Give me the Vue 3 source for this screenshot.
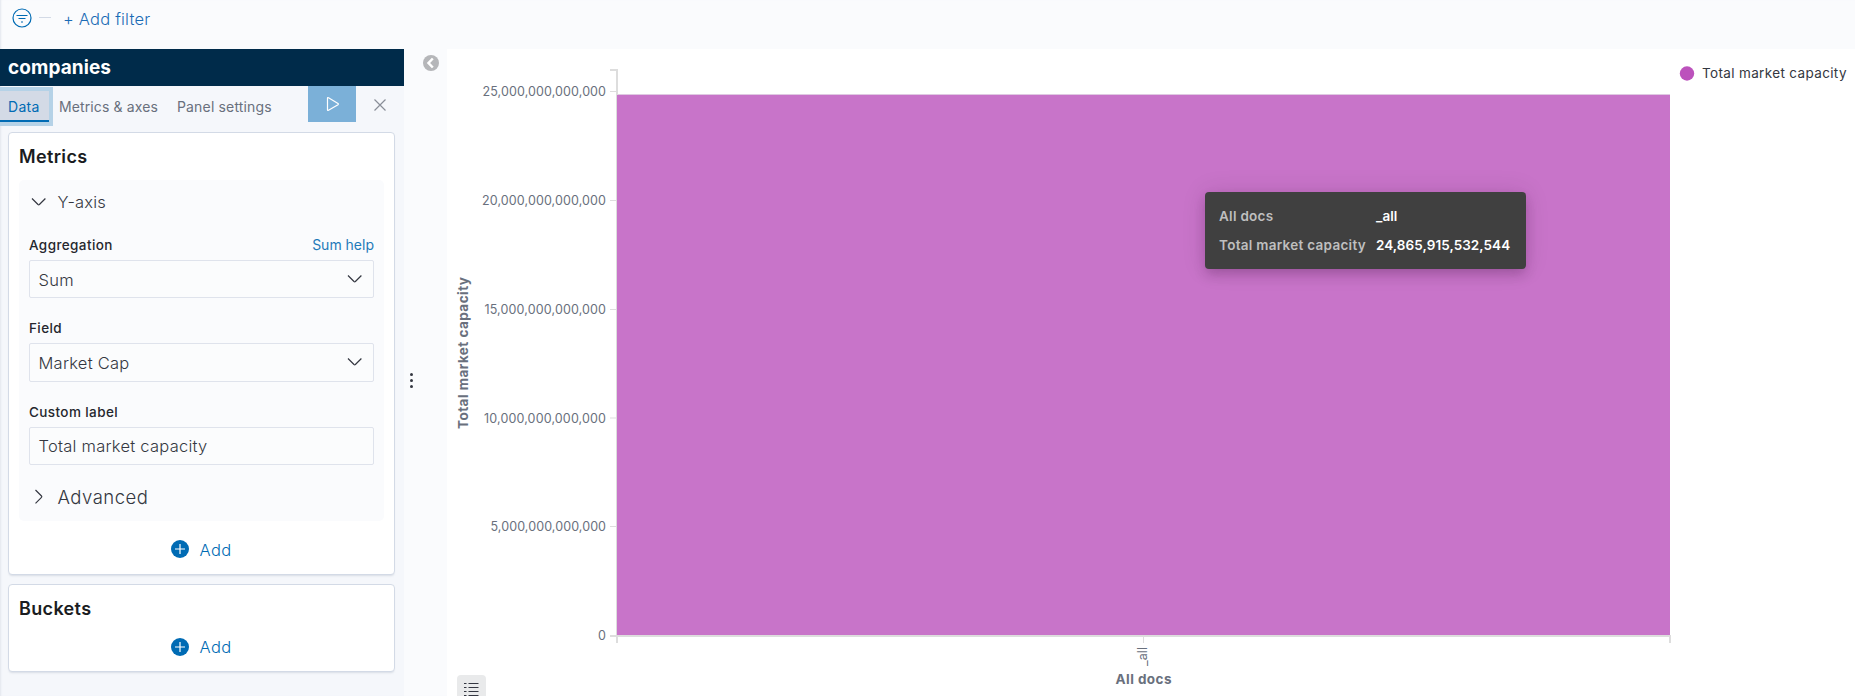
<script setup>
const ticks = [
  { y: 91.5, label: '25,000,000,000,000', w: 123.5 },
  { y: 200.5, label: '20,000,000,000,000', w: 124 },
  { y: 309.5, label: '15,000,000,000,000', w: 121.5 },
  { y: 418, label: '10,000,000,000,000', w: 122 },
  { y: 526.5, label: '5,000,000,000,000', w: 115.5 },
  { y: 635.5, label: '0', w: 7.5 },
]
</script>

<template>
  <div class="page">
    <header class="filters">
      <svg class="filter-icon" width="20" height="20" viewBox="0 0 20 20">
        <circle cx="10" cy="10" r="9" />
        <path d="M4.500 7.500h11M6.500 10.500h7M9 14h2" />
      </svg>
      <span class="dash"></span>
      <a class="add-filter">+ Add filter</a>
    </header>
    <div class="body">
      <aside class="sidebar">
        <h1 class="title"><span>companies</span></h1>
        <nav class="tabs">
          <div class="tab active"><span>Data</span></div>
          <div class="tab axes"><span>Metrics &amp; axes</span></div>
          <div class="tab panel"><span>Panel settings</span></div>
          <button class="play">
            <svg width="14" height="16" viewBox="0 0 14 16"><path d="M1.500 2.300v11.400q0 1.200 1 .6l9.500-5.600q.8-.6 0-1.200L2.500 1.700q-1-.6-1 .6z" /></svg>
          </button>
          <button class="close">
            <svg width="12" height="12" viewBox="0 0 12 12"><path d="M.5.5l11 11M11.500.5l-11 11" /></svg>
          </button>
        </nav>
        <section class="card metrics">
          <h2><span>Metrics</span></h2>
          <div class="agg">
            <div class="acc yaxis">
              <svg width="16" height="16" viewBox="0 0 16 16"><path d="M1 4.500l6 6q.7.6 1.400 0l6-6" /></svg>
              <span>Y-axis</span>
            </div>
            <div class="label first"><span>Aggregation</span><a>Sum help</a></div>
            <div class="field">
              <span>Sum</span>
              <svg width="16" height="16" viewBox="0 0 16 16"><path d="M1 4.500l6 6q.7.6 1.400 0l6-6" /></svg>
            </div>
            <div class="label"><span>Field</span></div>
            <div class="field tall">
              <span>Market Cap</span>
              <svg width="16" height="16" viewBox="0 0 16 16"><path d="M1 4.500l6 6q.7.6 1.400 0l6-6" /></svg>
            </div>
            <div class="label"><span>Custom label</span></div>
            <div class="field input"><span>Total market capacity</span></div>
            <div class="acc advanced">
              <svg width="16" height="16" viewBox="0 0 16 16"><path d="M4.500 1l6 6q.6.7 0 1.400l-6 6" /></svg>
              <span>Advanced</span>
            </div>
          </div>
          <div class="add">
            <svg width="18" height="18" viewBox="0 0 18 18"><circle cx="9" cy="9" r="9" /><path d="M4 9h10M9 4v10" /></svg>
            <span>Add</span>
          </div>
        </section>
        <section class="card buckets">
          <h2><span>Buckets</span></h2>
          <div class="add">
            <svg width="18" height="18" viewBox="0 0 18 18"><circle cx="9" cy="9" r="9" /><path d="M4 9h10M9 4v10" /></svg>
            <span>Add</span>
          </div>
        </section>
      </aside>
      <div class="gutter">
        <svg class="collapse" width="16" height="16" viewBox="0 0 16 16"><circle cx="8" cy="8" r="8" /><path d="M9.800 3.500L5.500 8l4.300 4.500" /></svg>
        <div class="handle"><i></i><i></i><i></i></div>
      </div>
      <main class="vis">
        <svg class="chart" width="1408" height="647" viewBox="447 49 1408 647">
          <rect class="bar" x="617" y="95" width="1053" height="540" />
          <rect class="bar-edge" x="617" y="94" width="1053" height="1" />
          <path class="axis thin" d="M616.500 70V636" />
          <path class="axis" d="M610 70H617V95M610 636H1670V643M617 636V643" />
          <path class="axis thin" d="M1143.500 637V643" />
          <g v-for="t in ticks" :key="t.label">
            <path v-if="t.label !== '0'" class="axis thin" :d="`M610 ${t.y}H616`" />
            <text class="tick" x="606" :y="t.y + 4.500" :textLength="t.w" text-anchor="end">{{ t.label }}</text>
          </g>
          <text class="tick" transform="translate(1147 666) rotate(-90)" textLength="19">_all</text>
          <text class="name" x="1115.500" y="684" textLength="56">All docs</text>
          <text class="name" transform="translate(468 429) rotate(-90)" textLength="152">Total market capacity</text>
          <circle class="dot" cx="1687" cy="73.500" r="7.200" />
          <text class="legend" x="1702" y="78" textLength="144.500">Total market capacity</text>
        </svg>
        <button class="list">
          <svg width="16" height="16" viewBox="0 0 16 16"><path d="M1 1.500h2.500M5.500 1.500h10M1 5.500h2.500M5.500 5.500h10M1 9.500h2.500M5.500 9.500h10M1 13.500h2.500M5.500 13.500h10" /></svg>
        </button>
        <div class="tooltip">
          <span class="k">All docs</span><span class="v">_all</span>
          <span class="k">Total market capacity</span><span class="v">24,865,915,532,544</span>
        </div>
      </main>
    </div>
  </div>
</template>

<style>
body { margin: 0; overflow: hidden; }
</style>

<style scoped>
* { box-sizing: border-box; }
.page { width: 1855px; height: 696px; overflow: hidden; background: #fafbfd; font-family: Inter, "Liberation Sans", sans-serif; color: #343741; display: flex; flex-direction: column; box-shadow: inset 2px 0 2px -1px #e3e7ee; }
svg { display: block; flex: none; }
svg path { fill: none; stroke: currentColor; stroke-width: 1.2; }
button { border: 0; padding: 0; margin: 0; background: none; }
span, a { white-space: nowrap; }
.filters { height: 49px; flex: none; display: flex; align-items: flex-start; padding: 8px 0 0 12px; color: #006bb4; }
.filter-icon circle { fill: none; stroke: currentColor; stroke-width: 1.2; }
.dash { width: 12px; height: 1px; background: #d3dae6; margin: 9px 12px 0 7px; }
.add-filter { font-size: 16.500px; line-height: 22px; font-weight: 350; color: #1a6bb5; letter-spacing: .2px; }
.body { flex: 1; display: flex; min-height: 0; }
.sidebar { width: 404px; background: #f5f7fb; flex: none; box-shadow: inset 2px 0 2px -1px #e3e7ee; }
.title { margin: 0; height: 37px; background: #002b4a; color: #fff; font-size: 19px; line-height: 37px; font-weight: 700; padding-left: 8px; }
.title span { letter-spacing: .08px; }
.tabs { height: 46px; display: flex; align-items: flex-start; color: #69707d; font-size: 14px; line-height: 41px; }
.active { width: 49px; height: 31px; margin-top: 5px; background: #d3dae6; color: #006bb4; padding-left: 8px; line-height: 31px; border-bottom: 2px solid #006bb4; box-shadow: 0 0 0 4px #b5d2e7; clip-path: inset(-4px -4px -4px 0); letter-spacing: .3px; }
.axes { margin-left: 10px; width: 118px; }
.axes span { letter-spacing: .12px; }
.panel { width: 131px; }
.panel span { letter-spacing: .16px; }
.play { width: 48px; height: 36px; background: #7bb0d8; color: #fff; display: flex; align-items: center; justify-content: center; }
.play svg { margin-left: 1px; }
.close { margin: 13px 0 0 18px; color: #898e98; }
.card { margin-left: 8px; width: 387px; background: #fff; border: 1px solid #d3dae6; border-radius: 4px; box-shadow: 0 2px 2px -1px rgba(152,162,179,.3); padding: 0 10px; }
.metrics { height: 443px; }
.buckets { height: 88px; margin-top: 9px; }
h2 { margin: 0; height: 47px; font-size: 18px; line-height: 47px; font-weight: 600; color: #1a1c21; }
h2 span { letter-spacing: .35px; }
.agg { width: 365px; height: 341px; border-radius: 5px; background: #fafbfd; padding: 0 10px; }
.acc { display: flex; align-items: center; padding-left: 2px; gap: 11px; font-weight: 350; }
.yaxis { height: 44px; font-size: 16.500px; letter-spacing: .2px; }
.advanced { height: 65px; font-size: 18.500px; letter-spacing: .5px; padding-bottom: 1px; }
.acc svg { margin-right: -.5px; }
.label { height: 45px; padding-top: 22px; font-size: 13.500px; line-height: 16px; font-weight: 550; display: flex; justify-content: space-between; letter-spacing: .4px; color: #25272e; }
.label.first { height: 36px; padding-top: 13px; }
.label a { color: #1f7ab9; font-weight: 400; font-size: 14px; letter-spacing: 0; }
.field { height: 38px; border: 1px solid #dfe3ec; border-radius: 2px; background: #fbfcfd; display: flex; align-items: center; justify-content: space-between; padding: 1px 10px 0 8.500px; font-size: 16.500px; font-weight: 300; color: #343741; letter-spacing: .25px; }
.field.input { padding: 0 10px 1px 8.500px; }
.field svg { position: relative; top: -1px; }
.tall { height: 39px; }
.add { height: 38px; display: flex; align-items: center; justify-content: center; gap: 11px; color: #006bb4; font-size: 16.500px; font-weight: 350; letter-spacing: .3px; margin: 9px 1px 0 0; }
.add span { position: relative; top: 1px; }
.add circle { fill: #006bb4; }
.add path { stroke: #fff; }
.buckets .add { margin-top: -4px; }
.buckets .add span { top: 0; }
.gutter { width: 43px; flex: none; padding: 6px 0 0 18.500px; }
.collapse circle { fill: #b5b6b9; }
.collapse path { stroke: #fff; stroke-width: 2.500; }
.handle { display: flex; flex-direction: column; gap: 3px; margin: 302px 0 0 -12.500px; }
.handle i { width: 3px; height: 3px; background: #343741; border-radius: 1.500px; }
.vis { flex: 1; background: #fff; position: relative; overflow: hidden; }
.bar { fill: #c874c9; }
.bar-edge { fill: #dfc9e2; }
.chart .axis { stroke: #ddd; stroke-width: 2; }
.chart .thin { stroke-width: 1; }
.tick { font-size: 12.500px; fill: #69707d; }
.name { font-size: 13.500px; font-weight: 700; fill: #69707d; }
.legend { font-size: 13.500px; fill: #343741; }
.dot { fill: #bc52bc; }
.list { position: absolute; left: 10px; top: 626px; width: 29px; height: 29px; border-radius: 4px; background: #e9eaeb; padding: 7px 0 0 6px; color: #343741; display: flex; align-items: flex-start; }
.tooltip { position: absolute; left: 758px; top: 143px; width: 321px; height: 77px; border-radius: 4px; background: #404040; box-shadow: 0 6px 12px -1px rgba(60,20,60,.25), 0 0 24px rgba(60,20,60,.12); display: grid; grid-template-columns: 157px 1fr; grid-auto-rows: 29px; padding: 10px 14px; line-height: 29px; font-size: 13.500px; font-weight: 600; color: #fff; }
.k { color: #bfbfbf; letter-spacing: .28px; }
.v { letter-spacing: .06px; }
</style>
